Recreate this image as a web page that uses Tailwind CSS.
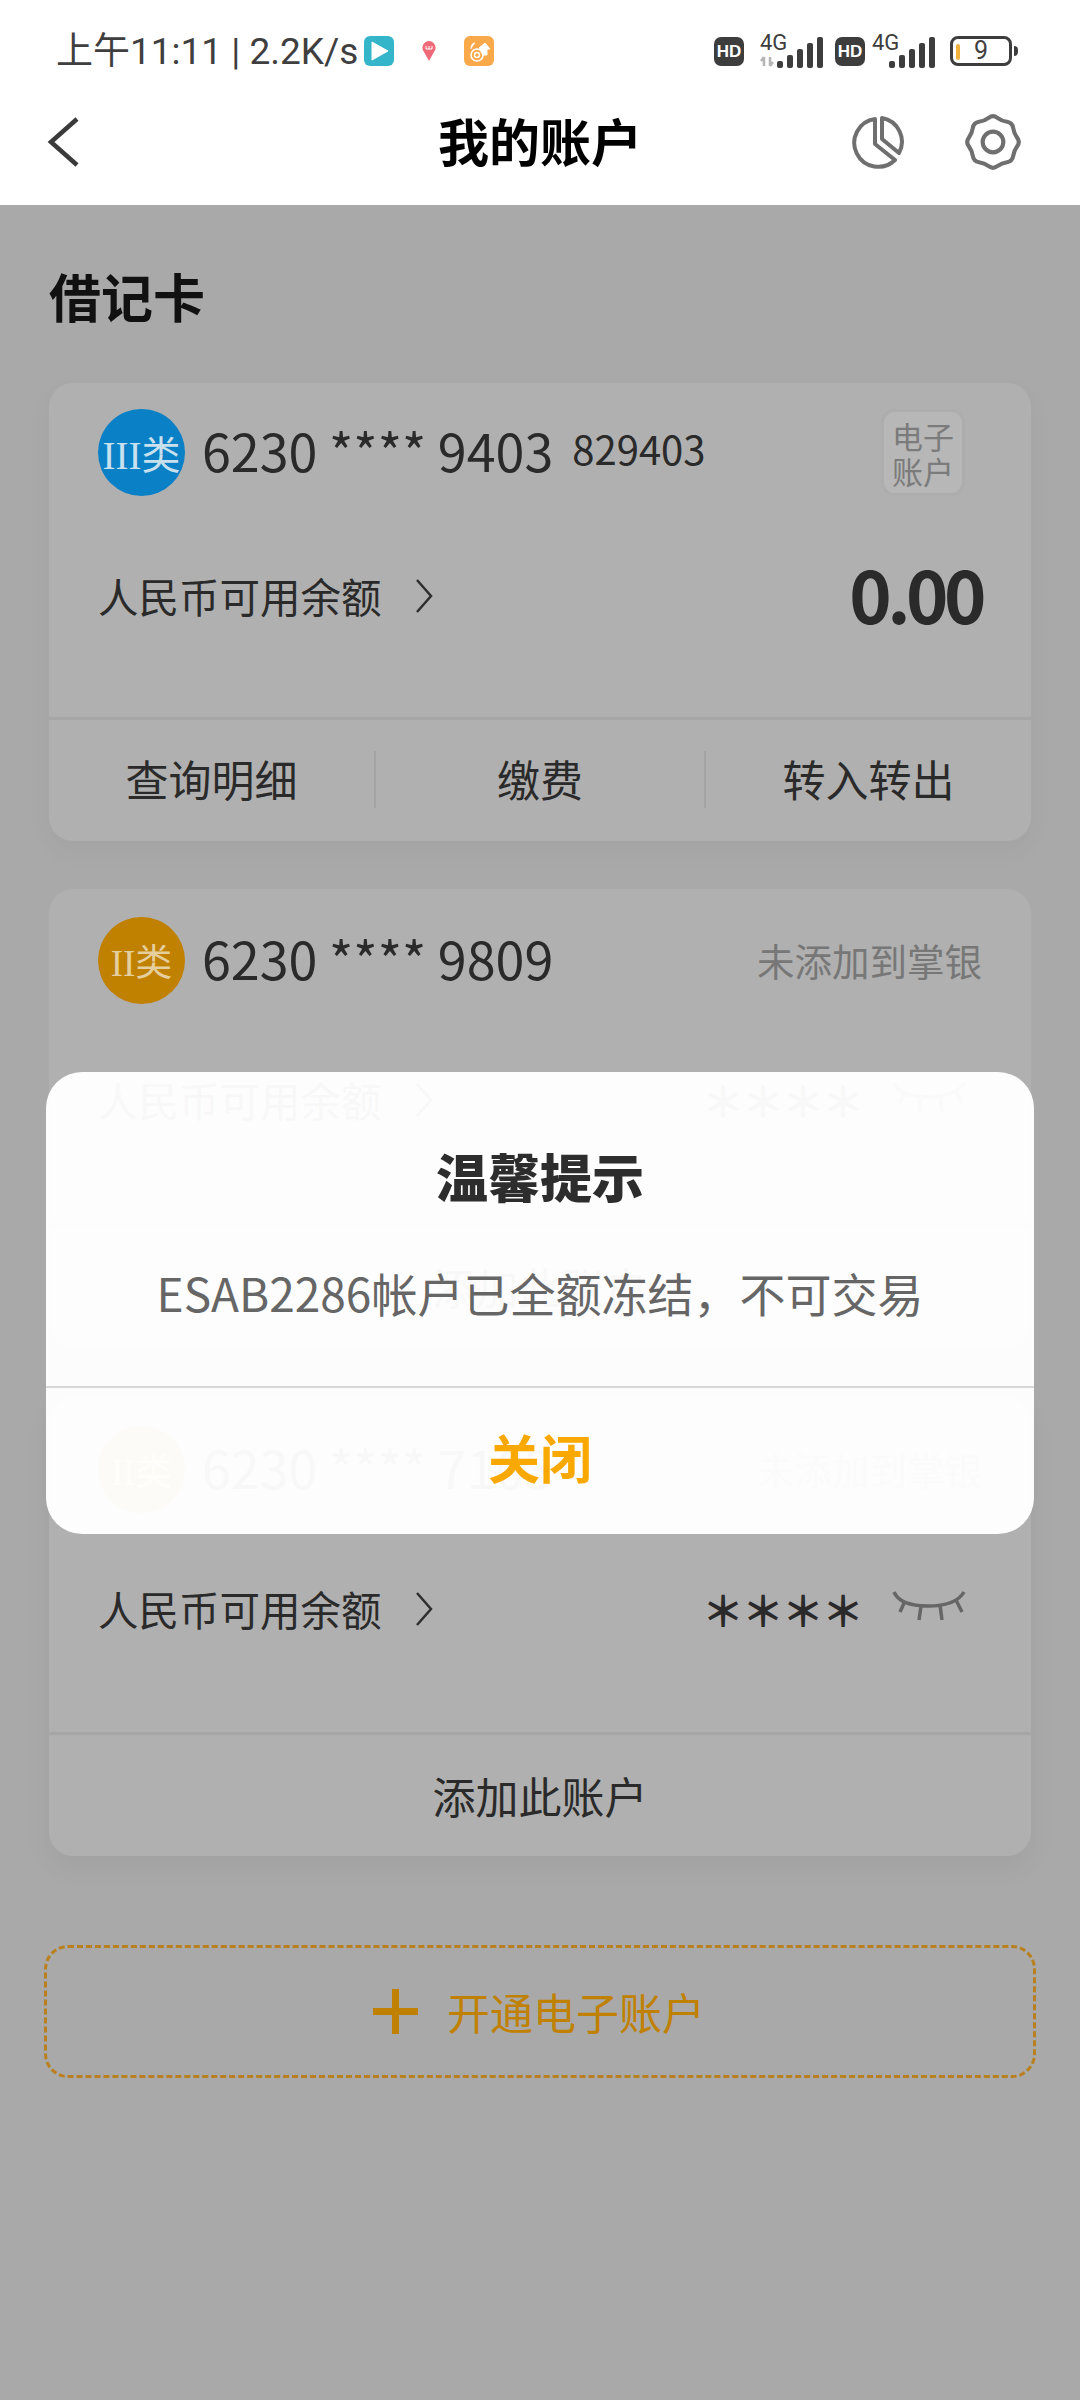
<!DOCTYPE html>
<html lang="zh-CN">
<head>
    <meta charset="UTF-8">
    <title>我的账户</title>
    <script src="https://cdn.jsdelivr.net/npm/@tailwindcss/browser@4"></script>
</head>
<body class="bg-[#a9a9a9] w-[1080px] h-[2400px] relative overflow-hidden font-['Noto_Sans_CJK_SC',sans-serif] text-[#2a2a2a]">

    <!-- 顶部 -->
    <header class="bg-white h-[205px]">
        <div class="h-[100px] flex items-center pl-[56px] pr-[62px] pt-[2px] text-[#3f3f3f]">
            <span class="text-[37px] leading-none font-['Roboto','Noto_Sans_CJK_SC',sans-serif] w-[308px] shrink-0 whitespace-nowrap">上午11:11 | 2.2K/s</span>
            <svg class="w-[30px] h-[30px]" viewBox="0 0 30 30"><rect width="30" height="30" rx="6" fill="#35b5c9"/><path d="M8 6 L24 15 L8 24Z" fill="#fff" stroke="#fff" stroke-linejoin="round"/></svg>
            <svg class="w-[14px] h-[20px] ml-[28px]" viewBox="0 0 14 20"><path d="M7 20 L2 11 A6.6 6.6 0 1 1 12 11Z" fill="#ef6a78"/><path d="M4 5v3h6V5M7 5v3" stroke="#fff" fill="none"/></svg>
            <svg class="w-[30px] h-[30px] ml-[28px]" viewBox="0 0 30 30"><rect width="30" height="30" rx="6" fill="#f9a84a"/><circle cx="13" cy="19" r="6" fill="none" stroke="#fff" stroke-width="1.6"/><circle cx="13" cy="19" r="2.5" fill="none" stroke="#fff" stroke-width="1.4"/><path d="M15 12 L21 7 L26 13 L23 13 L23 19 L19 19Z M7 13 Q7 7 11 7" fill="#fff" stroke="#fff"/></svg>

            <div class="ml-auto flex items-center">
                <span class="w-[30px] h-[29px] rounded-[7px] bg-[#3d3d3d] text-white text-[17px] font-bold leading-[29px] text-center font-['Liberation_Sans',sans-serif]">HD</span>
                <svg class="w-[63px] h-[36px] ml-[16px] overflow-visible" viewBox="0 0 63 36"><text x="0" y="17" font-size="22" fill="#3d3d3d" font-family="Roboto">4G</text><path d="M4 24v9M1 28l3-4M10 24v9M13 29l-3 4" stroke="#b5b5b5" stroke-width="2.5" fill="none"/><g fill="#3d3d3d"><rect x="17" y="28" width="6" height="7" rx="2"/><rect x="27" y="22" width="6" height="13" rx="2"/><rect x="37" y="16" width="6" height="19" rx="2"/><rect x="47" y="10" width="6" height="25" rx="2"/><rect x="57" y="4" width="6" height="31" rx="2"/></g></svg>
                <span class="w-[30px] h-[29px] rounded-[7px] bg-[#3d3d3d] text-white text-[17px] font-bold leading-[29px] text-center font-['Liberation_Sans',sans-serif] ml-[12px]">HD</span>
                <svg class="w-[63px] h-[36px] ml-[7px] overflow-visible" viewBox="0 0 63 36"><text x="0" y="17" font-size="22" fill="#3d3d3d" font-family="Roboto">4G</text><g fill="#3d3d3d"><rect x="17" y="28" width="6" height="7" rx="2"/><rect x="27" y="22" width="6" height="13" rx="2"/><rect x="37" y="16" width="6" height="19" rx="2"/><rect x="47" y="10" width="6" height="25" rx="2"/><rect x="57" y="4" width="6" height="31" rx="2"/></g></svg>
                <div class="ml-[15px] flex items-center">
                    <div class="w-[62px] h-[30px] rounded-[8px] border-[3px] border-[#3d3d3d] relative text-center text-[25px] leading-[24px] font-['Roboto',sans-serif]">
                        <span class="absolute left-[3px] top-[5px] w-[4px] h-[16px] rounded-sm bg-[#f0b23a]"></span>9
                    </div>
                    <span class="w-[4px] h-[10px] ml-[2px] rounded-r-sm bg-[#3d3d3d]"></span>
                </div>
            </div>
        </div>
        <div class="relative h-[105px] flex items-center justify-center pb-[24px]">
            <svg class="absolute left-[46px] top-[16px] w-[34px] h-[52px]" viewBox="0 0 34 52"><path d="M31 3 L5 26 L31 49" fill="none" stroke="#3a3a3a" stroke-width="4.5"/></svg>
            <h1 class="text-[51px] leading-none font-bold text-black">我的账户</h1>
            <svg class="absolute left-[851px] top-[15px] w-[54px] h-[54px]" viewBox="0 0 54 54" fill="none" stroke="#6f6f6f" stroke-width="4" stroke-linejoin="round"><path d="M24 4 A24 24 0 1 0 44 45 L24 29Z"/><path d="M31 3 L31 24 L48 38 A24 24 0 0 0 31 3Z"/></svg>
            <svg class="absolute left-[964px] top-[12px] w-[58px] h-[60px]" viewBox="-1 -1 56 58" fill="none" stroke="#6f6f6f" stroke-width="4"><path d="M22.8 4.6 Q27 1.5 31.2 4.6 Q35.4 7.7 40.55 8.5 Q45.7 9.3 46.5 14.45 Q47.3 19.6 50.4 23.8 Q53.5 28 50.4 32.2 Q47.3 36.4 46.5 41.55 Q45.7 46.7 40.55 47.5 Q35.4 48.3 31.2 51.4 Q27 54.5 22.8 51.4 Q18.6 48.3 13.45 47.5 Q8.3 46.7 7.5 41.55 Q6.7 36.4 3.6 32.2 Q0.5 28 3.6 23.8 Q6.7 19.6 7.5 14.45 Q8.3 9.3 13.45 8.5 Q18.6 7.7 22.8 4.6Z"/><circle cx="27" cy="28" r="10"/></svg>
        </div>
    </header>

    <main class="px-[49px]">
        <h2 class="text-[52px] leading-none font-bold text-[#111] pt-[65px] h-[178px]">借记卡</h2>

        <!-- III类 -->
        <section class="h-[458px] rounded-[24px] bg-[#b0b0b0] shadow-[0_10px_24px_rgba(0,0,0,0.04)] flex flex-col mb-[48px]">
            <div class="h-[337px] border-b-[3px] border-[#a6a6a6] px-[49px]">
                <div class="flex items-center pt-[26px]">
                    <span class="w-[87px] h-[87px] rounded-full bg-[#0a80c6] text-[#c9e0ee] text-[39px] leading-[87px] text-center whitespace-nowrap font-['Liberation_Serif','Noto_Sans_CJK_SC',serif]">III<span class="font-['Noto_Sans_CJK_SC',sans-serif]">类</span></span>
                    <span class="ml-[17px] text-[52px] leading-none -translate-y-[3px]">6230 **** 9403</span>
                    <span class="ml-[19px] text-[40px] leading-none -translate-y-[5px]">829403</span>
                    <span class="ml-auto mr-[17px] w-[84px] h-[87px] rounded-[14px] bg-[#b7b7b7] border-[3px] border-[#adadad] text-[#7b7b7b] text-[31px] leading-[35px] text-center flex items-center justify-center">电子<br>账户</span>
                </div>
                <div class="flex items-center justify-between mt-[61px]">
                    <div class="flex items-center translate-y-[3px]">
                        <span class="text-[40.5px] leading-none">人民币可用余额</span>
                        <svg class="w-[18px] h-[34px] ml-[33px]" viewBox="0 0 18 34"><path d="M2 1 L16 17 L2 33" fill="none" stroke="#2f2f2f" stroke-width="2.5"/></svg>
                    </div>
                    <span class="text-[72px] leading-none font-semibold tracking-[-4.5px]">0.00</span>
                </div>
            </div>
            <div class="flex-1 flex items-center text-[43px] leading-none -mt-[4px]">
                <span class="flex-1 text-center">查询明细</span>
                <span class="w-[2px] h-[57px] bg-[#a3a3a3] translate-y-[1px]"></span>
                <span class="w-[328px] text-center">缴费</span>
                <span class="w-[2px] h-[57px] bg-[#a3a3a3] translate-y-[1px]"></span>
                <span class="flex-1 text-center">转入转出</span>
            </div>
        </section>

        <!-- II类 -->
        <section class="h-[458px] rounded-[24px] bg-[#b0b0b0] flex flex-col mb-[51px]">
            <div class="h-[337px] border-b-[3px] border-[#a6a6a6] px-[49px]">
                <div class="flex items-center pt-[28px]">
                    <span class="w-[87px] h-[87px] rounded-full bg-[#c08000] text-[#e6cf9f] text-[37px] leading-[87px] text-center whitespace-nowrap font-['Liberation_Serif','Noto_Sans_CJK_SC',serif]">II<span class="font-['Noto_Sans_CJK_SC',sans-serif]">类</span></span>
                    <span class="ml-[17px] text-[52px] leading-none -translate-y-[3px]">6230 **** 9809</span>
                    <span class="ml-auto text-[37.5px] leading-none text-[#777] -translate-y-[1px]">未添加到掌银</span>
                </div>
                <div class="flex items-center justify-between mt-[66px] h-[60px]">
                    <div class="flex items-center">
                        <span class="text-[40.5px] leading-none">人民币可用余额</span>
                        <svg class="w-[18px] h-[34px] ml-[33px]" viewBox="0 0 18 34"><path d="M2 1 L16 17 L2 33" fill="none" stroke="#2f2f2f" stroke-width="2.5"/></svg>
                    </div>
                    <div class="flex items-center mr-[16px]">
                        <span class="text-[42px] leading-none tracking-[-2px] font-bold">＊＊＊＊</span>
                        <svg class="w-[74px] h-[32px] ml-[30px] -translate-y-[3px]" viewBox="0 0 74 32"><path d="M2 2 Q8 16 36 16 Q64 16 72 2 M13 11 L8 22 M29 16 L27 30 M48 15 L50 30 M64 10 L70 22" fill="none" stroke="#666" stroke-width="3.5"/></svg>
                    </div>
                </div>
            </div>
            <div class="flex-1 flex items-center justify-center text-[43px] leading-none -mt-[1px]">添加此账户</div>
        </section>

        <!-- II类 未添加 -->
        <section class="h-[458px] rounded-[24px] bg-[#b0b0b0] shadow-[0_12px_28px_rgba(0,0,0,0.05)] flex flex-col">
            <div class="h-[337px] border-b-[3px] border-[#a6a6a6] px-[49px]">
                <div class="flex items-center pt-[28px]">
                    <span class="w-[87px] h-[87px] rounded-full bg-[#c08000] text-[#e6cf9f] text-[37px] leading-[87px] text-center whitespace-nowrap font-['Liberation_Serif','Noto_Sans_CJK_SC',serif]">II<span class="font-['Noto_Sans_CJK_SC',sans-serif]">类</span></span>
                    <span class="ml-[17px] text-[52px] leading-none -translate-y-[3px]">6230 **** 7103</span>
                    <span class="ml-auto text-[37.5px] leading-none text-[#777] -translate-y-[1px]">未添加到掌银</span>
                </div>
                <div class="flex items-center justify-between mt-[66px] h-[60px]">
                    <div class="flex items-center">
                        <span class="text-[40.5px] leading-none">人民币可用余额</span>
                        <svg class="w-[18px] h-[34px] ml-[33px]" viewBox="0 0 18 34"><path d="M2 1 L16 17 L2 33" fill="none" stroke="#2f2f2f" stroke-width="2.5"/></svg>
                    </div>
                    <div class="flex items-center mr-[16px]">
                        <span class="text-[42px] leading-none tracking-[-2px] font-bold">＊＊＊＊</span>
                        <svg class="w-[74px] h-[32px] ml-[30px] -translate-y-[3px]" viewBox="0 0 74 32"><path d="M2 2 Q8 16 36 16 Q64 16 72 2 M13 11 L8 22 M29 16 L27 30 M48 15 L50 30 M64 10 L70 22" fill="none" stroke="#666" stroke-width="3.5"/></svg>
                    </div>
                </div>
            </div>
            <div class="flex-1 flex items-center justify-center text-[43px] leading-none -mt-[1px]">添加此账户</div>
        </section>

        <!-- 开通 -->
        <div class="mt-[89px] -mx-[5px] h-[133px] rounded-[24px] border-[3px] border-dashed border-[#b8801e] flex items-center justify-center text-[#c08000] pr-[2px]">
            <svg class="w-[45px] h-[45px] mr-[29px]" viewBox="0 0 45 45"><path d="M22.5 0V45M0 22.5H45" stroke="#c08000" stroke-width="7"/></svg>
            <span class="text-[43px] leading-none">开通电子账户</span>
        </div>
    </main>

    <!-- 弹窗 -->
    <div class="absolute left-[46px] top-[1072px] w-[988px] h-[462px] rounded-[36px] bg-white/[0.97] flex flex-col">
        <div class="h-[316px] border-b-2 border-[#d8d8d8] flex flex-col items-center">
            <h3 class="mt-[78px] text-[52px] leading-none font-black text-[#2d2d2d]">温馨提示</h3>
            <p class="mt-[67px] text-[46px] leading-none text-[#666]">ESAB2286帐户已全额冻结，不可交易</p>
        </div>
        <div class="flex-1 flex items-center justify-center text-[52px] font-bold leading-none text-[#f9a800] pb-[8px]">关闭</div>
    </div>
</body>
</html>
